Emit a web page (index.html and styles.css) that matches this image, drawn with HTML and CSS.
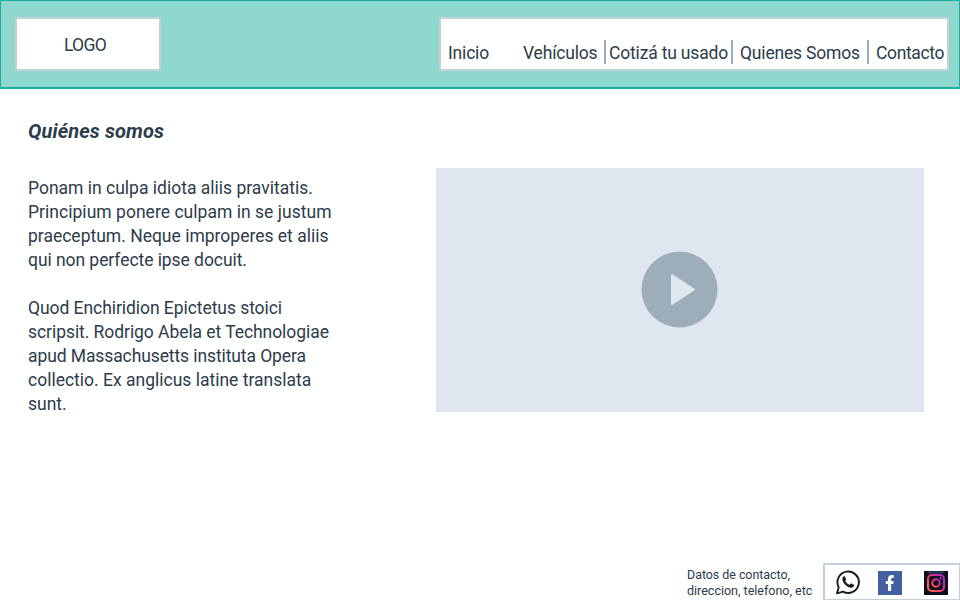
FILE: index.html
```html
<!DOCTYPE html>
<html lang="es">
<head>
<meta charset="utf-8">
<title>Quiénes somos</title>
<link rel="stylesheet" href="styles.css">
</head>
<body>
<header class="header">
  <div class="logo">LOGO</div>
  <nav class="nav">
    <a class="inicio">Inicio</a>
    <a class="vehiculos">Vehículos</a>
    <a class="cotiza">Cotizá tu usado</a>
    <a class="quienes">Quienes Somos</a>
    <a class="contacto">Contacto</a>
  </nav>
</header>
<main class="main">
  <section class="about">
    <h1>Quiénes somos</h1>
    <p>Ponam in culpa idiota aliis pravitatis.<br><span class="loose">Principium ponere culpam in se justum</span><br>praeceptum. Neque improperes et aliis<br><span class="tight">qui non perfecte ipse docuit.</span></p>
    <p><span class="tight">Quod Enchiridion Epictetus stoici</span><br><span class="tight">scripsit. Rodrigo Abela et Technologiae</span><br><span class="tighter">apud Massachusetts instituta Opera</span><br>collectio. Ex anglicus latine translata<br>sunt.</p>
  </section>
  <div class="video">
    <svg width="78" height="78" viewBox="0 0 78 78">
      <circle cx="38.500" cy="38.500" r="38" fill="#9eadba"/>
      <path d="M31 24.300 53 38.500 31 52.900Z" fill="#dfe6ed" stroke="#dfe6ed" stroke-width="2" stroke-linejoin="round"/>
    </svg>
  </div>
</main>
<footer class="footer">
  <p class="address"><span class="tight">Datos de contacto,</span><br>direccion, telefono, etc</p>
  <div class="social">
    <svg width="26" height="26" viewBox="0 0 26 26">
      <path d="M2 24.300 3.700 18.200A10.700 10.700 0 1 1 8 22.600Z" fill="#fff" stroke="#1b1b1d" stroke-width="1.900" stroke-linejoin="round"/>
      <path d="M8.900 7.200c-.6.200-1.500 1.200-1.500 2.700 0 3.900 4.900 8.800 8.700 8.800 1.800 0 2.900-1.100 3-2.800l-2.900-1.600c-.6-.1-1.100 1.400-1.700 1.400-1.200 0-4.100-2.800-4.100-3.700 0-.4.900-1 .8-1.500L9.900 7.500c-.2-.4-.5-.4-1-.3z" fill="#1b1b1d"/>
    </svg>
    <svg width="24" height="24" viewBox="0 0 24 24">
      <rect width="24" height="24" fill="#42609f"/>
      <path d="M10 20v-7.100H7.800v-3H10V8c0-2.700 1.500-4 3.800-4h1.800v3h-1.200c-1 0-1.300.5-1.300 1.400v1.500h2.500l-.4 3h-2.100V20z" fill="#fff"/>
    </svg>
    <svg width="24" height="24" viewBox="0 0 24 24">
      <defs>
        <linearGradient id="glow" x1="0" y1="1" x2="1" y2="0">
          <stop offset="0" stop-color="#ff7048"/><stop offset=".45" stop-color="#f5306f"/><stop offset="1" stop-color="#a42bd0"/>
        </linearGradient>
      </defs>
      <rect width="24" height="24" fill="#0c1020"/>
      <path d="M4 1.500h16" stroke="#214052" stroke-width="2"/>
      <g fill="none" stroke="url(#glow)" stroke-width="2">
        <rect x="4" y="4" width="16" height="16" rx="4"/>
        <circle cx="12" cy="12" r="3.700"/>
      </g>
      <circle cx="16.600" cy="7.400" r="1.100" fill="#c63bc8"/>
    </svg>
  </div>
</footer>
</body>
</html>
```
FILE: styles.css
```css
* { box-sizing: border-box; }
body {
  margin: 0;
  height: 600px;
  display: flex;
  flex-direction: column;
  overflow: hidden;
  background: #fff;
  color: #2c3c4a;
  font: 17.5px/24px Roboto, "Liberation Sans", sans-serif;
}
.header {
  height: 89px;
  display: flex;
  justify-content: space-between;
  padding: 16px 10px 0 14px;
  background: #8fd8ce;
  border: solid #1aae9f;
  border-width: 1px 1px 2px;
}
.logo, .nav {
  height: 54px;
  background: #fff;
  border: 2px solid #c3cfdb;
}
.logo {
  width: 146px;
  padding: 14px 6px 0 0;
  text-align: center;
  letter-spacing: -.7px;
}
.nav {
  width: 510px;
  display: grid;
  grid-template-columns: 75px 83px 127px 136px 1fr;
  padding: 21px 0 0 7px;
}
.nav a { height: 24px; padding-top: 1px; white-space: nowrap; letter-spacing: -.18px; }
.vehiculos, .cotiza, .quienes { border-right: 2px solid #9eadba; }
.nav .cotiza { padding-left: 3px; }
.nav .quienes { padding-left: 7px; }
.nav .contacto { padding-left: 7px; letter-spacing: -.35px; }
.main {
  flex: 1;
  display: flex;
  padding: 29px 36px 0 28px;
}
.about { width: 408px; }
.about h1 {
  margin: 0 0 32px;
  font-size: 20px;
  line-height: 26px;
  font-style: italic;
  font-weight: 700;
  letter-spacing: .1px;
}
.about p { margin: 0 0 24px; white-space: nowrap; }
.loose { letter-spacing: .03px; }
.tight { letter-spacing: -.06px; }
.tighter { letter-spacing: -.1px; }
.video {
  width: 488px;
  height: 244px;
  margin-top: 50px;
  display: grid;
  place-items: center;
  background: #dfe6ed;
}
.footer {
  height: 37px;
  display: flex;
  justify-content: flex-end;
}
.address { margin: 4px 0 0; width: 136px; font-size: 12.5px; line-height: 16px; white-space: nowrap; }
.social {
  width: 137px;
  display: flex;
  align-items: center;
  padding-left: 10px;
  background: #fff;
  border: 2px solid #c3cfdb;
  border-width: 2px 1px 1px 2px;
}
.social svg:nth-child(2) { margin: 2px 22px 0 17px; }
.social svg:nth-child(3) { margin-top: 2px; }
```
